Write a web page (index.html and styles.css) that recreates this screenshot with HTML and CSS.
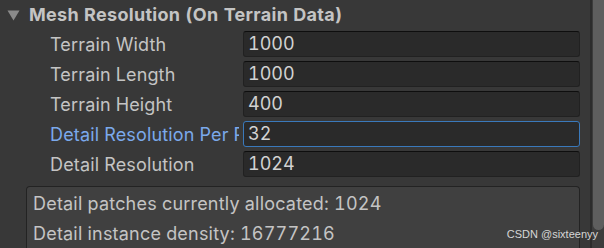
FILE: index.html
```html
<!DOCTYPE html>
<html lang="en">
<head>
    <meta charset="UTF-8">
    <title>Mesh Resolution</title>
    <link rel="stylesheet" href="styles.css">
</head>
<body>
    <div class="inspector">
        <div class="panel">
            <div class="foldout">
                <svg class="arrow" width="13" height="11" viewBox="0 0 13 11">
                    <polygon points="0.5,0.5 12.5,0.5 6.5,10.5" fill="#8a8a8a"/>
                </svg>
                <span class="foldout-title">Mesh Resolution (On Terrain Data)</span>
            </div>

            <div class="field-row">
                <div class="label">Terrain Width</div>
                <div class="input">1000</div>
            </div>
            <div class="field-row">
                <div class="label">Terrain Length</div>
                <div class="input">1000</div>
            </div>
            <div class="field-row">
                <div class="label">Terrain Height</div>
                <div class="input">400</div>
            </div>
            <div class="field-row focused">
                <div class="label">Detail Resolution Per Patch</div>
                <div class="input">32</div>
            </div>
            <div class="field-row">
                <div class="label">Detail Resolution</div>
                <div class="input">1024</div>
            </div>

            <div class="help-box">
                <p>Detail patches currently allocated: 1024</p>
                <p>Detail instance density: 16777216</p>
            </div>
        </div>
        <div class="scrollbar">
            <div class="thumb"></div>
        </div>
    </div>
    <div class="watermark">CSDN @sixteenyy</div>
</body>
</html>
```

FILE: styles.css
```css
html {
    overflow: hidden;
}
body {
    font-family: Inter, 'Noto Sans', 'Liberation Sans', sans-serif;
    font-variant-numeric: tabular-nums;
    margin: 0;
    background-color: #383838;
    color: #c4c4c4;
    width: 604px;
    height: 248px;
    overflow: hidden;
    position: relative;
}
.inspector {
    display: flex;
    height: 248px;
    overflow: hidden;
}
.panel {
    width: 590px;
    flex-shrink: 0;
}
.foldout {
    display: flex;
    align-items: center;
    height: 29px;
    padding-left: 7px;
}
.arrow {
    display: block;
    margin-right: 9px;
    margin-top: 1px;
}
.foldout-title {
    font-weight: 700;
    font-size: 18px;
    color: #c4c4c4;
    letter-spacing: 0.3px;
}
.field-row {
    display: flex;
    align-items: center;
    height: 30px;
    padding-left: 50px;
}
.label {
    width: 189px;
    margin-right: 4px;
    font-size: 18px;
    letter-spacing: 0.15px;
    white-space: nowrap;
    overflow: hidden;
    color: #c4c4c4;
}
.input {
    box-sizing: border-box;
    width: 337px;
    height: 26px;
    line-height: 24px;
    padding-left: 4px;
    font-size: 18px;
    color: #d2d2d2;
    background-color: #2a2a2a;
    border: 1px solid #212121;
    border-top-color: #0e0e0e;
    border-radius: 3px;
}
.focused .label {
    color: #7ba9eb;
}
.focused .input {
    border-color: #3a79bb;
}
.help-box {
    box-sizing: border-box;
    margin: 7px 0 0 26px;
    width: 554px;
    height: 62px;
    padding: 2px 6px;
    background-color: #404040;
    border: 1px solid #232323;
    border-bottom: none;
    border-radius: 4px 4px 0 0;
}
.help-box p {
    margin: 0;
    font-size: 18px;
    line-height: 30px;
    letter-spacing: 0.2px;
    color: #c4c4c4;
}
.scrollbar {
    flex: 1;
    border-left: 2px solid #2c2c2c;
    background-color: #3c3c3c;
}
.thumb {
    height: 230px;
    margin-left: 1px;
    background-color: #5e5e5e;
    border-radius: 0 0 6px 6px;
}
.watermark {
    position: absolute;
    right: 6px;
    bottom: 8px;
    font-family: 'Liberation Sans', sans-serif;
    font-size: 11px;
    color: #d6d6d6;
}
```
